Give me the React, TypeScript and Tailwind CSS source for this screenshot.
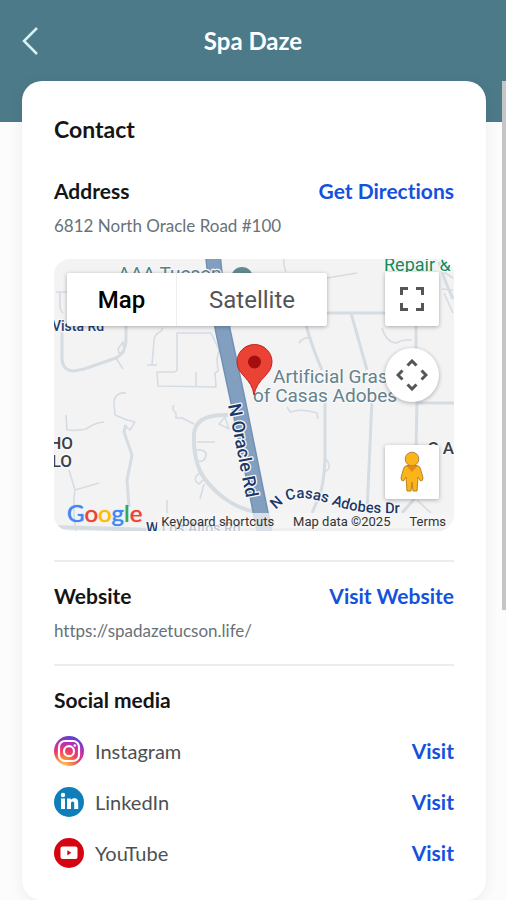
import type { ReactNode } from "react";

const minorRoads = [
  "M2 33H13M6 33V46Q6 52 9 54",
  "M108 69Q109 72 104 74Q100 77 100 82L98 106M93 106H103",
  "M123 74V110Q123 113 119 113H103L104 127L162 128L161 114L164 112L163 100L165 91L157 74Z",
  "M142 113V128",
  "M72 134Q61 133 60 143L61 156L73 161L81 163M70 166L76 171L81 163",
  "M12 156L13 171Q24 172 32 170Q40 164 50 163",
  "M15 211L21 231L45 224M21 231Q18 248 22 272",
  "M120 146Q117 150 122 154V159H128L140 165",
  "M143 183H161M142 191Q153 190 152 197Q150 204 143 202",
  "M146 214Q137 220 145 225L150 220M150 225L146 240",
  "M165 165L171 158L175 170Z",
  "M113 241V258M62 99L69 110M65 94L64 90L69 83L70 93Z",
  "M230 0Q229 5 232 13M273 19L303 14",
  "M245 84Q249 78 256 79",
  "M328 69Q332 83 342 84Q350 80 358 81",
  "M233 148L236 153Q248 149 263 154L264 160",
  "M271 199Q280 209 270 213",
  "M363 241L377 254M387 11L399 19M388 30L399 31M390 34L399 54",
];

const localRoads = [
  "M8 72V98Q8 112 20 112L30 110L62 99Q72 94 72 81V66",
  "M72 166L70 173L78 196L76 206L73 221L75 248",
  "M252 66Q258 88 268 111M271 140V198Q270 228 264 240L258 254",
  "M297 54L313 111M318 140L313 254",
  "M362 67V90M363 140L362 190M363 144H400",
  "M273 54H332",
  "M362 238L348 254",
  "M385 3L392 24L399 40",
];

function StreetMap() {
  return (
    <svg
      className="absolute inset-0 h-full w-full"
      viewBox="0 0 400 272"
      preserveAspectRatio="xMidYMid slice"
      role="img"
      aria-label="Map of North Oracle Road"
      fontFamily="Roboto, sans-serif"
    >
      <rect x="-400" width="1200" height="272" fill="#f3f3f4" />
      <g fill="none" stroke="#d5dce2" strokeLinejoin="round">
        {minorRoads.map((d) => (
          <path key={d} d={d} strokeWidth="1.6" />
        ))}
        {localRoads.map((d) => (
          <path key={d} d={d} strokeWidth="3" />
        ))}
        <path d="M174 156Q142 155 140 174Q139 196 146 212Q153 226 170 239Q186 251 204 253" strokeWidth="4" />
        <path d="M0 268L100 271H400" strokeWidth="4" />
      </g>
      <path d="M159 -3Q163 40 169 72L184 142L211 275" fill="none" stroke="#7391b4" strokeWidth="16" />
      <path d="M159 -3Q163 40 169 72L184 142L211 275" fill="none" stroke="#829fc0" strokeWidth="13" />

      <g stroke="#f8f9fa" strokeWidth="2.5" paintOrder="stroke" strokeLinejoin="round">
        <text x="64" y="21" fontSize="19" fill="#5c7f88">AAA Tucson</text>
        <text x="330" y="12" fontSize="18" fill="#168a58">Repair &amp;</text>
        <text x="219" y="124" fontSize="19" fill="#65828c">Artificial Grass</text>
        <text x="199" y="143" fontSize="19" fill="#65828c">of Casas Adobes</text>
        <text x="-2" y="72" fontSize="14" fontWeight="500" fill="#243f70">Vista Rd</text>
        <text x="92" y="274" fontSize="14" fontWeight="500" fill="#243f70">W Los Altos Rd</text>
        <g fill="#3b3f45" fontWeight="500" textAnchor="end">
          <text x="19" y="190" fontSize="17">HO</text>
          <text x="18" y="208" fontSize="17">LO</text>
          <text x="400" y="195" fontSize="17">C A</text>
        </g>
        <g fontWeight="500" fill="#1c3868">
          <text transform="translate(174 146) rotate(79)" fontSize="18">N Oracle Rd</text>
          <path id="casas-adobes" d="M222 251Q232 239 248 239Q264 240 282 247Q306 256 356 254" fill="none" stroke="none" />
          <text fontSize="15">
            <textPath href="#casas-adobes">N Casas Adobes Dr</textPath>
          </text>
        </g>
      </g>
      <circle cx="188" cy="19" r="11" fill="#638b91" />
      <path
        d="M200 136C198 119 183 116 183 103A17 17 0 0 1 218 103C218 116 203 119 200 136Z"
        fill="#ea4335"
        stroke="#c5221f"
      />
      <circle cx="200.500" cy="103" r="6.500" fill="#a50e0e" />
    </svg>
  );
}

const mapControl = "flex size-[54px] items-center justify-center bg-white text-[#555] shadow-[0_1px_4px_rgba(0,0,0,0.3)]";

function LocationMap() {
  return (
    <div className="relative mt-[21px] h-[272px] overflow-hidden rounded-2xl font-[Roboto,sans-serif]">
      <StreetMap />
      <div className="absolute top-[14px] left-[13px] flex h-[53px] rounded-xs bg-white text-2xl shadow-[0_1px_4px_rgba(0,0,0,0.3)]">
        <button type="button" className="w-[110px] border-r border-[#eee] font-medium text-black">Map</button>
        <button type="button" className="w-[150px] text-[#555]">Satellite</button>
      </div>
      <div className="absolute top-[13px] right-[15px] flex flex-col">
        <button type="button" aria-label="Toggle fullscreen view" className={`${mapControl} rounded-xs`}>
          <svg className="size-[26px]" viewBox="0 0 26 26" fill="none" stroke="currentColor" strokeWidth="3">
            <path d="M2.500 9V2.500H9M17 2.500H23.500V9M23.500 17V23.500H17M9 23.500H2.500V17" />
          </svg>
        </button>
        <button type="button" aria-label="Map camera controls" className={`${mapControl} mt-[22px] rounded-full`}>
          <svg className="size-8" viewBox="0 0 32 32" fill="none" stroke="currentColor" strokeWidth="3">
            <path d="M11.500 6.500L16 2L20.500 6.500M11.500 25.500L16 30L20.500 25.500M6.500 11.500L2 16L6.500 20.500M25.500 11.500L30 16L25.500 20.500" />
          </svg>
        </button>
        <button type="button" aria-label="Drag Pegman onto the map to open Street View" className={`${mapControl} mt-[43px] rounded-xs`}>
          <svg className="h-[42px] w-6" viewBox="0 0 24 42">
            <path
              d="M7 14.500H17Q20 15 20.500 18L23 27Q23 30 20.500 30L18 26L17 40H13L12 31L11 40H7L6 26L3.500 30Q1 30 1 27L3.500 18Q4 15 7 14.500Z"
              fill="#fbb41a"
              stroke="#b98422"
            />
            <path d="M6.500 15H17.500L12 21Z" fill="#e58a17" />
            <circle cx="12" cy="8" r="6.800" fill="#fbb41a" stroke="#a98746" />
          </svg>
        </button>
      </div>
      <div className="absolute bottom-[3px] left-[13px] font-[Lato,sans-serif] text-2xl leading-[30px] [text-shadow:0_0_1px_currentColor]">
        <span className="text-[#4285f4]">G</span>
        <span className="text-[#ea4335]">o</span>
        <span className="text-[#fbbc04]">o</span>
        <span className="text-[#4285f4]">g</span>
        <span className="text-[#34a853]">l</span>
        <span className="text-[#ea4335]">e</span>
      </div>
      <div className="absolute right-0 bottom-0 flex h-[18px] items-center gap-[19px] bg-[#f5f5f5]/75 pr-2 pl-1 text-[13px] leading-[18px] text-[#333]">
        <button type="button">Keyboard shortcuts</button>
        <span>Map data ©2025</span>
        <a href="#terms">Terms</a>
      </div>
    </div>
  );
}

function InstagramIcon() {
  return (
    <svg className="size-[30px]" viewBox="0 0 30 30" aria-hidden="true">
      <defs>
        <radialGradient id="instagram" cx="0.300" cy="1.050" r="1.100">
          <stop offset="0" stopColor="#ffd879" />
          <stop offset="0.250" stopColor="#fa923f" />
          <stop offset="0.500" stopColor="#ee3f5c" />
          <stop offset="0.720" stopColor="#c42eac" />
          <stop offset="1" stopColor="#5140d4" />
        </radialGradient>
      </defs>
      <circle cx="15" cy="15" r="15" fill="url(#instagram)" />
      <rect x="5" y="5" width="20" height="20" rx="6" fill="none" stroke="#fff" strokeWidth="2.200" />
      <circle cx="15" cy="15.200" r="5" fill="none" stroke="#fff" strokeWidth="2.200" />
      <circle cx="20.800" cy="9.500" r="1.300" fill="#fff" />
    </svg>
  );
}

function LinkedInIcon() {
  return (
    <svg className="size-[30px]" viewBox="0 0 30 30" aria-hidden="true">
      <circle cx="15" cy="15" r="15" fill="#0e7fb8" />
      <g fill="#fff">
        <circle cx="9" cy="8" r="2.200" />
        <rect x="7" y="11.500" width="4" height="10.500" />
        <path d="M13 11.500H16.800V13C17.600 11.700 19 11.200 20.300 11.200C23.300 11.200 24.200 13.200 24.200 16V22H20.200V16.600C20.200 15.200 19.700 14.400 18.600 14.400C17.500 14.400 17 15.300 17 16.600V22H13Z" />
      </g>
    </svg>
  );
}

function YouTubeIcon() {
  return (
    <svg className="size-[30px]" viewBox="0 0 30 30" aria-hidden="true">
      <circle cx="15" cy="15" r="15" fill="#d40511" />
      <rect x="6.500" y="8.500" width="17" height="12.500" rx="2" fill="#fff" />
      <path d="M13.300 12.200L17.300 14.800L13.300 17.400Z" fill="#d40511" />
    </svg>
  );
}

function SectionHeading({ title, link, href }: { title: string; link: string; href: string }) {
  return (
    <div className="flex items-center justify-between text-[21px] leading-7 font-bold">
      <h3 className="text-[#151515]">{title}</h3>
      <a href={href} className="text-[#1651dc]">{link}</a>
    </div>
  );
}

const socialLinks: { name: string; icon: ReactNode }[] = [
  { name: "Instagram", icon: <InstagramIcon /> },
  { name: "LinkedIn", icon: <LinkedInIcon /> },
  { name: "YouTube", icon: <YouTubeIcon /> },
];

export default function App() {
  return (
    <div className="relative min-h-screen bg-[#fcfcfd] font-[Lato,sans-serif] [font-variant-ligatures:none]">
      <header className="h-[122px] bg-[#4c7a89]">
        <div className="grid h-[82px] grid-cols-[1fr_auto_1fr] items-center px-[22px]">
          <button type="button" aria-label="Go back" className="w-4 text-[#d9f1f3]">
            <svg className="h-7 w-4" viewBox="0 0 16 28" fill="none" stroke="currentColor" strokeWidth="2.500">
              <path d="M15 1L2 14L15 27" />
            </svg>
          </button>
          <h1 className="text-2xl font-bold text-white">Spa Daze</h1>
        </div>
      </header>
      <main className="relative mr-5 -mt-[41px] ml-[22px] rounded-[20px] bg-white px-8 pt-[34px] pb-8 shadow-[0_2px_14px_rgba(40,50,70,0.08)]">
        <h2 className="text-[23px] leading-7 font-bold text-[#151515]">Contact</h2>
        <section className="mt-[34px]">
          <SectionHeading title="Address" link="Get Directions" href="#directions" />
          <p className="mt-[9px] text-[17px] leading-6 text-[#687278]">6812 North Oracle Road #100</p>
          <LocationMap />
        </section>
        <section className="mt-[29px] border-t-2 border-[#ededee] pt-5">
          <SectionHeading title="Website" link="Visit Website" href="https://spadazetucson.life/" />
          <p className="mt-[9px] text-[17px] leading-6 text-[#687278]">https://spadazetucson.life/</p>
        </section>
        <section className="mt-[21px] border-t-2 border-[#ededee] pt-5">
          <h3 className="text-[21px] leading-7 font-bold text-[#151515]">Social media</h3>
          <ul className="mt-[22px] flex flex-col gap-[21px]">
            {socialLinks.map(({ name, icon }) => (
              <li key={name} className="flex h-[30px] items-center text-xl">
                {icon}
                <span className="ml-[11px] text-[#4c5054]">{name}</span>
                <a href={`#${name.toLowerCase()}`} aria-label={`Visit ${name}`} className="ml-auto text-[21px] font-bold text-[#1651dc]">Visit</a>
              </li>
            ))}
          </ul>
        </section>
      </main>
      <div className="absolute top-[81px] right-0 h-[529px] w-1 bg-[#c4c5c6]" />
    </div>
  );
}
